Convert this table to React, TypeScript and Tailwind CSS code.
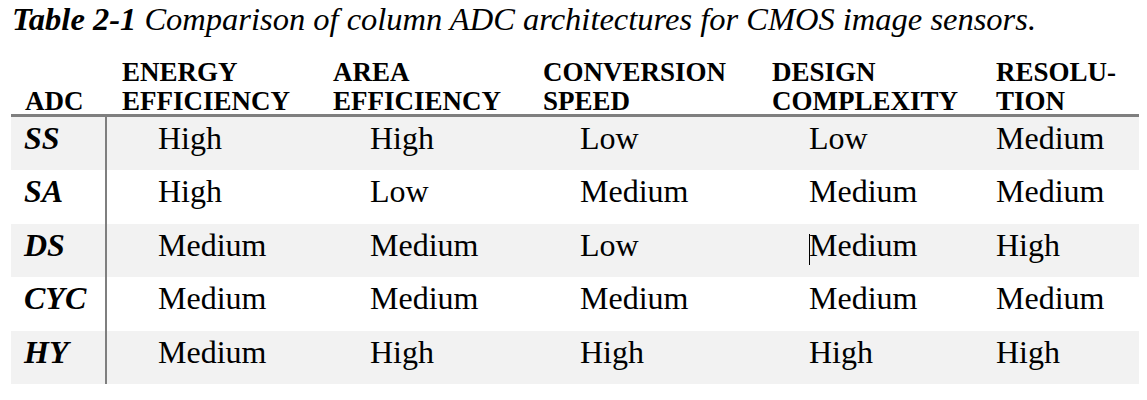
const headers = [
  ["ADC"],
  ["ENERGY", "EFFICIENCY"],
  ["AREA", "EFFICIENCY"],
  ["CONVERSION", "SPEED"],
  ["DESIGN", "COMPLEXITY"],
  ["RESOLU-", "TION"],
];

const rows = [
  { adc: "SS", cells: ["High", "High", "Low", "Low", "Medium"] },
  { adc: "SA", cells: ["High", "Low", "Medium", "Medium", "Medium"] },
  { adc: "DS", cells: ["Medium", "Medium", "Low", "Medium", "High"] },
  { adc: "CYC", cells: ["Medium", "Medium", "Medium", "Medium", "Medium"] },
  { adc: "HY", cells: ["Medium", "High", "High", "High", "High"] },
];

const grid = "grid grid-cols-[96px_211px_210px_229px_224px_158px]";

export default function App() {
  return (
    <div className="h-[400px] w-[1147px] overflow-hidden bg-white text-black font-['Liberation_Serif',serif]">
      {/* Caption */}
      <div className="h-[58px] pl-[12px] pt-[4px] text-[32.5px] leading-[31px] italic whitespace-nowrap">
        <span className="font-bold">Table 2-1</span> Comparison of column ADC architectures for CMOS image sensors.
      </div>

      <div className="ml-[11px] w-[1128px]">
        {/* Header */}
        <div className={`${grid} h-[59px] items-end border-b-[3px] border-[#7f7f7f] pb-px text-[27px] font-bold leading-[29px]`}>
          {headers.map((lines, i) => (
            <div key={i} className={i === 0 ? "pl-[14px]" : "pl-[15px]"}>
              {lines.map((l) => (
                <div key={l}>{l}</div>
              ))}
            </div>
          ))}
        </div>

        {/* Body */}
        {rows.map((row, r) => (
          <div
            key={row.adc}
            className={`${grid} h-[53.4px] text-[32px] leading-[32px] ${r % 2 === 0 ? "bg-[#f2f2f2]" : "bg-white"}`}
          >
            <div className="border-r-2 border-[#7f7f7f] pl-[13px] pt-[5px] font-bold italic">{row.adc}</div>
            {row.cells.map((c, i) => (
              <div key={i} className={`relative pt-[5px] ${i === 4 ? "pl-[15px]" : i === 0 ? "pl-[51px]" : "pl-[52px]"}`}>
                {r === 2 && i === 3 && (
                  <span className="absolute left-[52px] top-[10px] h-[31px] w-px bg-black" />
                )}
                {c}
              </div>
            ))}
          </div>
        ))}
      </div>
    </div>
  );
}
